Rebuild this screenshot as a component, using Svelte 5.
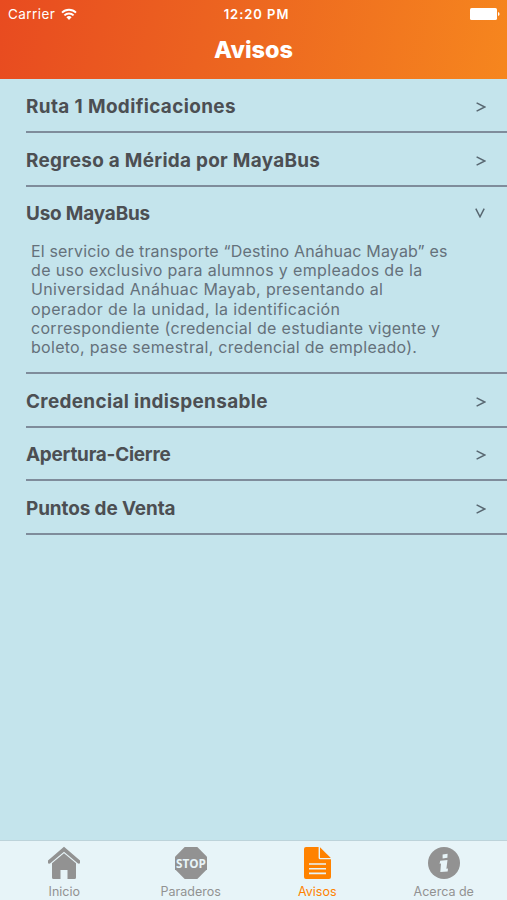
<script>
  let notices = $state([
    { title: 'Ruta 1 Modificaciones', spacing: 0.38 },
    { title: 'Regreso a Mérida por MayaBus', spacing: 0.29 },
    {
      title: 'Uso MayaBus',
      spacing: -0.15,
      open: true,
      lines: [
        { text: 'El servicio de transporte “Destino Anáhuac Mayab” es', spacing: 0.16 },
        { text: 'de uso exclusivo para alumnos y empleados de la', spacing: 0.35 },
        { text: 'Universidad Anáhuac Mayab, presentando al', spacing: 0.34 },
        { text: 'operador de la unidad, la identificación', spacing: 0.38 },
        { text: 'correspondiente (credencial de estudiante vigente y', spacing: 0.3 },
        { text: 'boleto, pase semestral, credencial de empleado).', spacing: 0.29 },
      ],
    },
    { title: 'Credencial indispensable', spacing: 0.35 },
    { title: 'Apertura-Cierre', spacing: -0.23 },
    { title: 'Puntos de Venta', spacing: -0.08 },
  ]);

  const tabs = [
    { id: 'home', label: 'Inicio' },
    { id: 'stops', label: 'Paraderos' },
    { id: 'notices', label: 'Avisos' },
    { id: 'about', label: 'Acerca de' },
  ];

  let current = $state('notices');
</script>

<div class="screen">
  <header>
    <div class="status">
      <div class="carrier">
        <span>Carrier</span>
        <svg width="16" height="12" viewBox="0 0 16 12">
          <g fill="none" stroke="#fff" stroke-width="1.9">
            <path d="M1 4.6a10 10 0 0 1 14 0" />
            <path d="M3.4 7.4a6.5 6.5 0 0 1 9.2 0" />
          </g>
          <path d="M5.4 9.3a3.7 3.7 0 0 1 5.2 0L8 11.9z" fill="#fff" />
        </svg>
      </div>
      <span class="time">12:20 PM</span>
      <div class="battery">
        <svg width="30" height="12" viewBox="0 0 30 12">
          <rect width="27" height="12" rx="1.6" fill="#fff" />
          <path d="M28 4q1.6.4 1.6 2T28 8z" fill="#fff" />
        </svg>
      </div>
    </div>
    <h1>Avisos</h1>
  </header>

  <main>
    {#each notices as notice}
      <section>
        <button class="title" onclick={() => (notice.open = !notice.open)}>
          <span style:letter-spacing={`${notice.spacing}px`}>{notice.title}</span>
          <svg class="arrow" class:open={notice.open} width="10" height="10" viewBox="0 0 10 10">
            <path d="M.6.8 8.8 5 .6 9.2" fill="none" stroke="#596872" stroke-width="1.5" />
          </svg>
        </button>
        {#if notice.open && notice.lines}
          <p>
            {#each notice.lines as line}
              <span style:letter-spacing={`${line.spacing}px`}>{line.text}</span>
            {/each}
          </p>
        {/if}
      </section>
    {/each}
  </main>

  <nav>
    {#each tabs as tab}
      <button class="tab" class:active={current === tab.id} onclick={() => (current = tab.id)}>
        <svg width="34" height="34" viewBox="0 0 34 34" fill="currentColor">
          {#if tab.id === 'home'}
            <path d="M17 .8 1 14.4v2.8q1.2.9 2.3 0L17 5.7l13.7 11.5q1.1.9 2.3 0v-2.8z" />
            <path d="M17 7.2 5 17.3V31.5Q5 33 6.5 33h7V24h7v9h7q1.5 0 1.5-1.5V17.3z" />
          {:else if tab.id === 'stops'}
            <path d="M10.7 1h12.6L33 10.7v12.6L23.3 33H10.7L1 23.3V10.7z" />
            <text x="17" y="21.6" class="stop" textLength="30" lengthAdjust="spacingAndGlyphs">STOP</text>
          {:else if tab.id === 'notices'}
            <path d="M6 1h12.6v10.7q0 1.5 1.5 1.5H31V31q0 2-2 2H6q-2 0-2-2V3q0-2 2-2z" />
            <path d="M20 1.3 30.8 12H20z" />
            <g fill="none" stroke="#e7f4f8" stroke-width="1.6">
              <path d="M9 18h17M9 22.7h17M9 27.4h17" />
            </g>
          {:else}
            <circle cx="17" cy="17" r="16" />
            <path
              d="M15.6 8.600 20.600 7.800l-.2 4-4.800.8zM13.2 14.800l7.300-.8-1.100 8.800 1.600-.2-.3 2.800-7.400.7.700-8.600-1.400.2z"
              fill="#e7f4f8"
            />
          {/if}
        </svg>
        <span>{tab.label}</span>
      </button>
    {/each}
  </nav>
</div>

<style>
  :global(body) {
    margin: 0;
  }

  .screen {
    display: flex;
    flex-direction: column;
    height: 900px;
    background: #c4e4ec;
    font-family: Inter, 'Liberation Sans', sans-serif;
  }

  header {
    height: 79px;
    background: linear-gradient(100deg, #e84b20, #ed6820 50%, #f6861e);
    color: #fff;
  }

  .status {
    display: grid;
    grid-template-columns: 1fr auto 1fr;
    align-items: center;
    height: 27px;
    padding: 0 7px 0 8px;
    font-size: 13.5px;
  }

  .carrier {
    display: flex;
    align-items: center;
    gap: 6px;
    letter-spacing: 0.45px;
  }

  .time {
    padding-left: 5px;
    font-weight: 600;
    font-size: 13px;
    letter-spacing: 0.95px;
  }

  .battery {
    display: flex;
    justify-content: flex-end;
  }

  h1 {
    margin: 8px 0 0;
    font-size: 23.5px;
    line-height: 30px;
    font-weight: 800;
    text-align: center;
  }

  main {
    flex: 1;
  }

  section {
    margin-left: 26px;
    border-bottom: 2px solid #7f8c9b;
  }

  button {
    border: 0;
    padding: 0;
    background: none;
    font-family: inherit;
    cursor: pointer;
  }

  .title {
    display: flex;
    align-items: center;
    justify-content: space-between;
    width: 100%;
    height: 51.75px;
    padding: 4px 21px 0 0;
    color: #4c4f53;
    font-size: 18.9px;
    line-height: 24px;
    font-weight: 700;
    white-space: nowrap;
  }

  .arrow.open {
    transform: translate(-1px, -1px) rotate(90deg);
  }

  p {
    margin: 0;
    padding: 4px 0 15px 5px;
    color: #65717b;
    font-size: 16px;
    line-height: 19.1px;
    white-space: nowrap;
  }

  p span {
    display: block;
    width: max-content;
  }

  nav {
    display: grid;
    grid-template-columns: repeat(4, 1fr);
    height: 59px;
    padding-left: 1px;
    border-top: 1px solid #bdd3da;
    background: #e7f4f8;
  }

  .tab {
    display: flex;
    flex-direction: column;
    align-items: center;
    padding-top: 5px;
    color: #929292;
    font-size: 12.5px;
  }

  .tab span {
    margin-top: 4px;
    line-height: 15px;
  }

  .tab.active {
    color: #ff8200;
  }

  .stop {
    fill: #e7f4f8;
    font-family: 'Open Sans', sans-serif;
    font-size: 12.8px;
    font-weight: 700;
    text-anchor: middle;
  }
</style>
